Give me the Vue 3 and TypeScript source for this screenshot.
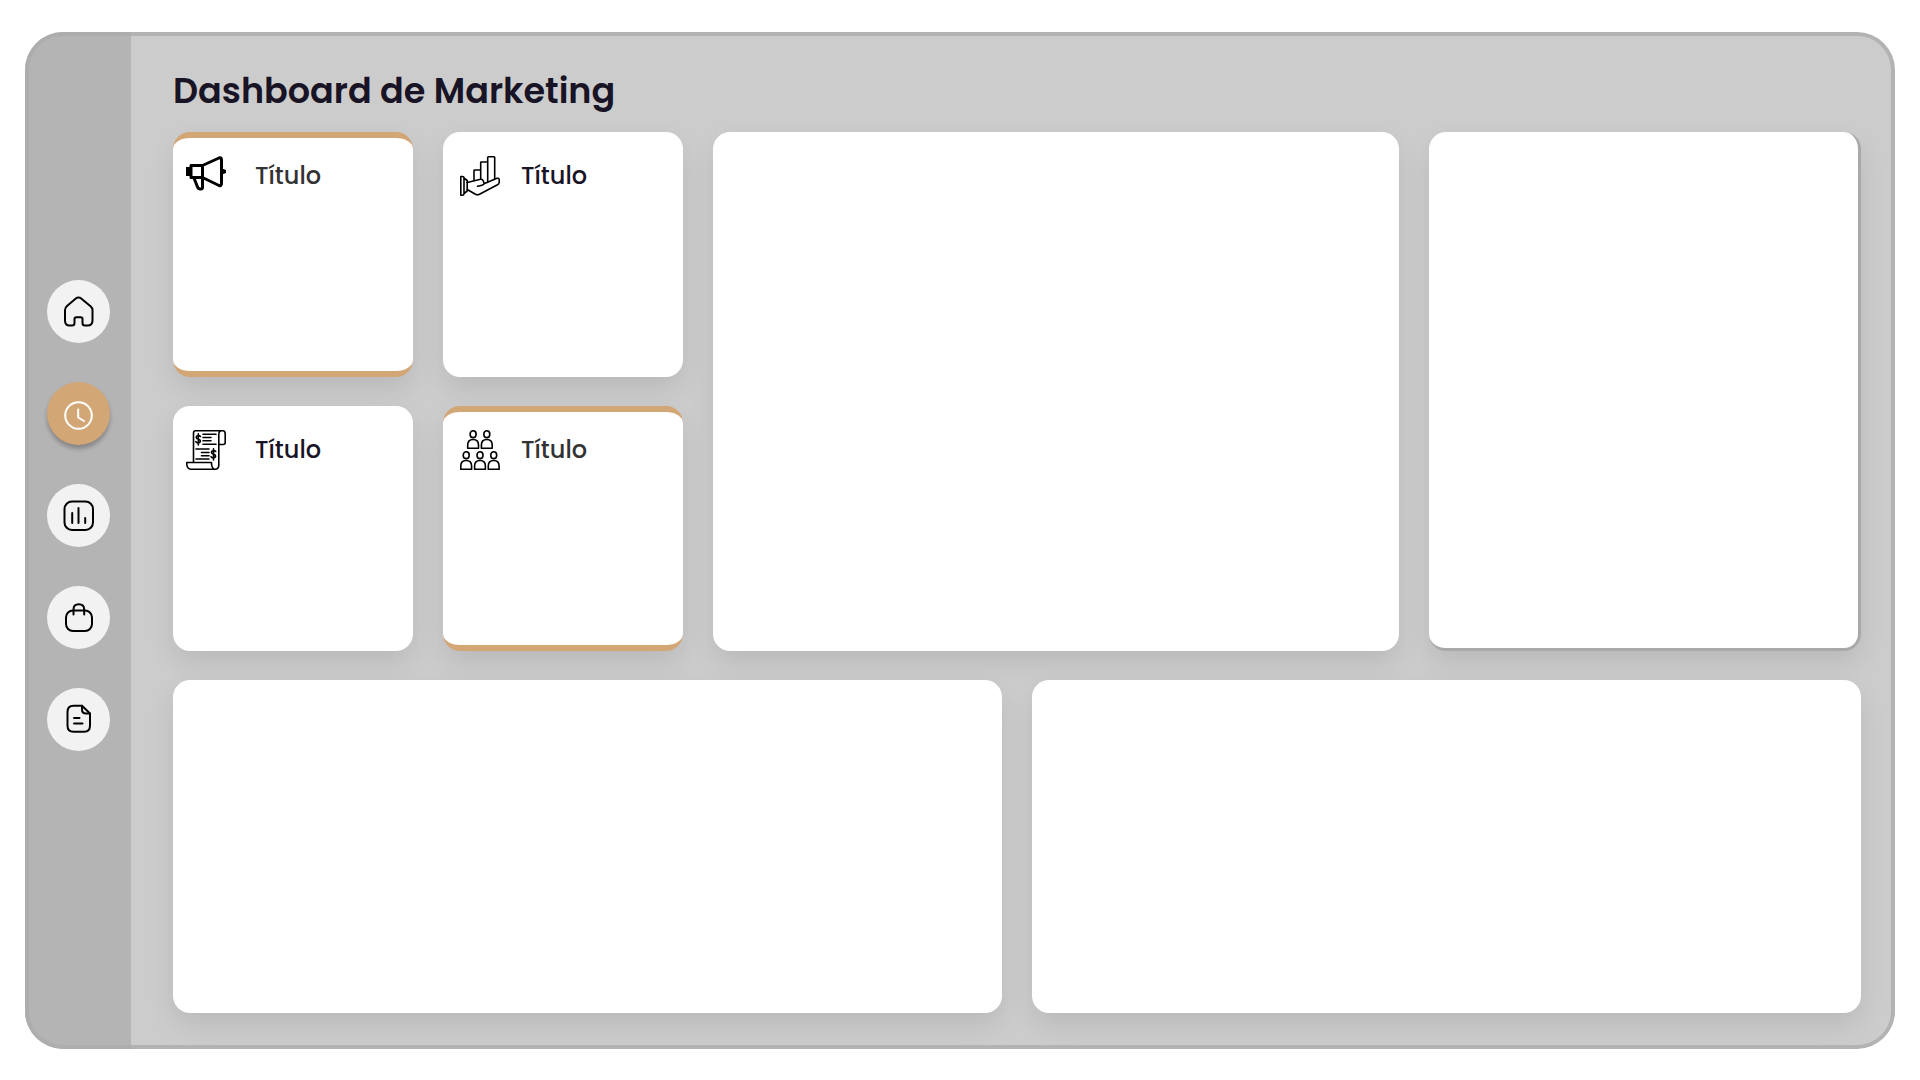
<script setup lang="ts">
import { ref } from 'vue'

interface NavItem {
  id: string
  label: string
}

const navItems: NavItem[] = [
  { id: 'home', label: 'Início' },
  { id: 'recent', label: 'Recentes' },
  { id: 'reports', label: 'Relatórios' },
  { id: 'shop', label: 'Loja' },
  { id: 'documents', label: 'Documentos' },
]

const active = ref('recent')
</script>

<template>
  <div class="page">
    <div class="frame">
      <nav class="sidebar">
        <button
          v-for="item in navItems"
          :key="item.id"
          type="button"
          class="nav-button"
          :class="{ active: item.id === active }"
          :aria-label="item.label"
          @click="active = item.id"
        >
          <svg class="nav-icon" viewBox="-.5 -.5 33 33" aria-hidden="true">
            <path
              v-if="item.id === 'home'"
              d="M7 30H9.5Q12 30 12 27.500V23.500Q12 21.700 13.800 21.700H18.200Q20 21.700 20 23.500V27.500Q20 30 22.500 30H25Q30 30 30 25V14.500Q30 12.300 28 10.700L19 3.200Q16 .8 13 3.200L4.500 10.500Q2.500 12.300 2.500 14.500V25Q2.500 30 7 30Z"
            />
            <template v-else-if="item.id === 'recent'">
              <circle cx="16" cy="18" r="13.300" />
              <path d="M15.700 12V20L21.500 23.500" />
            </template>
            <template v-else-if="item.id === 'reports'">
              <rect x="2" y="2" width="28.500" height="28.500" rx="7.500" />
              <path d="M9.700 13.500V23.500M16 8.500V23.500M22.700 18.500V23.500" />
            </template>
            <template v-else-if="item.id === 'shop'">
              <rect x="3.500" y="9" width="26" height="20.500" rx="7" />
              <path d="M11 13V8Q11 2.800 16.300 2.800T21.700 8V13" />
            </template>
            <template v-else>
              <path d="M19.500 2.300H11Q5 2.300 5 8.500V22Q5 28.300 11 28.300H21.500Q27.500 28.300 27.500 22V10Z" />
              <path d="M19.500 2.300V6Q19.500 10 23.500 10H27.500M11.500 14.500H17M11.500 20H20" />
            </template>
          </svg>
        </button>
      </nav>

      <main class="content">
        <h1 class="heading">Dashboard de Marketing</h1>

        <div class="upper">
          <section class="card accent near">
            <svg class="card-icon" viewBox="0 0 40 40" aria-hidden="true">
              <g stroke-width="3">
                <path d="M5 9.500H16.500V21.500H5ZM16.500 9.500L33 2Q35.500 1 35.500 4V27Q35.500 30.500 33 29.500L16.500 21.500M8 22L11.500 31Q12.500 33.500 15 33Q16.500 33 16.500 31V21.500" />
              </g>
              <path class="solid" d="M0 11H5V20H0ZM36 12.500L40 14V17L36 18.500Z" />
            </svg>
            <h2 class="card-title">Título</h2>
          </section>

          <section class="card far">
            <svg class="card-icon" viewBox="0 0 40 40" aria-hidden="true">
              <g stroke-width="1.600">
                <path d="M.8 20.500H2.500Q4 20.500 4 22V37.500Q4 39.200 2.500 39.200H.8ZM4 22L7.200 24.500V35L4 37.500" />
                <path d="M7.200 26.500L20.500 23.300Q22.500 23 23.300 25L24.200 27.500Q23.500 29.500 17.500 30.300M24 27.800L37 22.300Q39.200 21.700 39.200 24V26.500Q39 28 37.500 28.800L19.500 38.300Q17.500 39.200 15.500 38.300L7.200 33.500" />
                <path d="M14 24.500V14.500Q14 14 14.700 14H20.700M20.700 23V6.500Q20.700 6 21.400 6H27.500M27.700 25.800V1.500Q27.700 .8 28.400 .8H34Q34.700 .8 34.700 1.500V23" />
              </g>
            </svg>
            <h2 class="card-title">Título</h2>
          </section>

          <section class="card near">
            <svg class="card-icon" viewBox="0 0 40 40" aria-hidden="true">
              <g stroke-width="1.600">
                <path d="M7.500 32V3Q7.500 .8 9.500 .8H37Q39.200 .8 39.200 4V12.500Q39.200 14.500 37 14.500H32.800V5Q32.800 .8 35.500 .8M32.800 14.500V35Q32.800 39.200 29 39.200H4.500Q.8 38.500 .8 34V32.500H25.500V34Q26 39 29 39.200" />
                <path d="M17 4.200H30M17 7.500H25M17 10.800H25M17 14.200H30M10 19H23M15.500 22.500H23M15.500 25.800H23M10 29H23" />
                <path d="M14.500 6.500Q13.500 5.500 12 5.700Q10 6 10.300 7.700Q10.500 9 12.500 9.300Q14.500 9.800 14.400 11.300Q14 13 12 13Q10.500 13 9.800 11.700M12.300 3.800V15M29.700 21.500Q28.700 20.500 27.200 20.700Q25.200 21 25.500 22.700Q25.700 24 27.700 24.300Q29.700 24.800 29.600 26.300Q29.200 28 27.200 28Q25.700 28 25 26.700M27.500 18.800V30" />
              </g>
            </svg>
            <h2 class="card-title">Título</h2>
          </section>

          <section class="card accent far">
            <svg class="card-icon" viewBox="0 0 40 40" aria-hidden="true">
              <defs>
                <g id="person">
                  <ellipse cx="6.200" cy="4.200" rx="3" ry="3.400" />
                  <path d="M.8 18.300V15Q.8 9.500 6.200 9.500T11.600 15V18.300Z" />
                </g>
              </defs>
              <g stroke-width="1.600">
                <use href="#person" x="6.900" />
                <use href="#person" x="20.600" />
                <use href="#person" y="21" />
                <use href="#person" x="13.800" y="21" />
                <use href="#person" x="27.500" y="21" />
              </g>
            </svg>
            <h2 class="card-title">Título</h2>
          </section>

          <section class="card tall middle"></section>
          <section class="card tall edged"></section>
        </div>

        <div class="lower">
          <section class="card"></section>
          <section class="card"></section>
        </div>
      </main>
    </div>
  </div>
</template>

<style>
body {
  margin: 0;
  background: #ffffff;
}
</style>

<style scoped>
.page {
  box-sizing: border-box;
  display: flex;
  min-height: 100vh;
  padding: 32px 25px 31px;
  font-family: Poppins, Inter, sans-serif;
}

.frame {
  position: relative;
  display: flex;
  flex: 1;
  overflow: hidden;
  border-radius: 38px;
  background: #cccccc;
}

/* Translucent outline, laid over both the sidebar and the content */
.frame::after {
  content: '';
  position: absolute;
  inset: 0;
  border: 4px solid rgba(171, 171, 171, 0.76);
  border-radius: 38px;
  pointer-events: none;
}

.sidebar {
  box-sizing: border-box;
  display: flex;
  flex: none;
  flex-direction: column;
  align-items: center;
  justify-content: center;
  gap: 39px;
  width: 106px;
  padding-bottom: 50px;
  background: #b4b4b4;
}

.nav-button {
  display: flex;
  align-items: center;
  justify-content: center;
  width: 63px;
  height: 63px;
  padding: 0;
  border: 0;
  border-radius: 50%;
  background: #f2f2f2;
  color: #000000;
  cursor: pointer;
}

.nav-button.active {
  background: #d3a676;
  color: #ffffff;
  box-shadow: 0 4px 4px rgba(0, 0, 0, 0.25);
}

.nav-icon {
  width: 33px;
  height: 33px;
  fill: none;
  stroke: currentColor;
  stroke-width: 2;
  stroke-linecap: round;
  stroke-linejoin: round;
}

.content {
  display: flex;
  flex: 1;
  flex-direction: column;
  min-width: 0;
  padding: 34px 34px 36px 42px;
}

.heading {
  margin: 0 0 16px;
  color: #181425;
  font-size: 35px;
  font-weight: 600;
  line-height: 50px;
}

.upper {
  display: grid;
  flex: 519 1 0;
  grid-template-columns: 240fr 240fr 686fr 432fr;
  grid-template-rows: 1fr 1fr;
  gap: 29px 30px;
}

.lower {
  display: grid;
  flex: 333 1 0;
  grid-template-columns: 1fr 1fr;
  gap: 30px;
  margin-top: 29px;
}

.card {
  box-sizing: border-box;
  display: flex;
  align-items: flex-start;
  border: 0 solid transparent;
  border-width: 6px 0;
  border-radius: 17px;
  background: #ffffff;
  box-shadow: 0 12px 28px -2px rgba(0, 0, 0, 0.1);
}

.accent {
  border-color: #d3a676;
}

.near {
  gap: 29px;
  padding: 18px 13px;
}

.far {
  gap: 21px;
  padding: 18px 17px;
}

.tall {
  grid-row: 1 / 3;
}

.middle {
  grid-column: 3;
}

.edged {
  grid-column: 4;
  border-width: 0 3px 3px 0;
  border-color: #a9a9a9;
}

.card-icon {
  flex: none;
  width: 40px;
  height: 40px;
  fill: none;
  stroke: #000000;
  stroke-linecap: round;
  stroke-linejoin: round;
}

.solid {
  fill: #000000;
  stroke: none;
}

.card-title {
  margin: 0;
  color: #181425;
  font-size: 24px;
  font-weight: 500;
  line-height: 40px;
}

.accent .card-title {
  color: #333333;
}
</style>
